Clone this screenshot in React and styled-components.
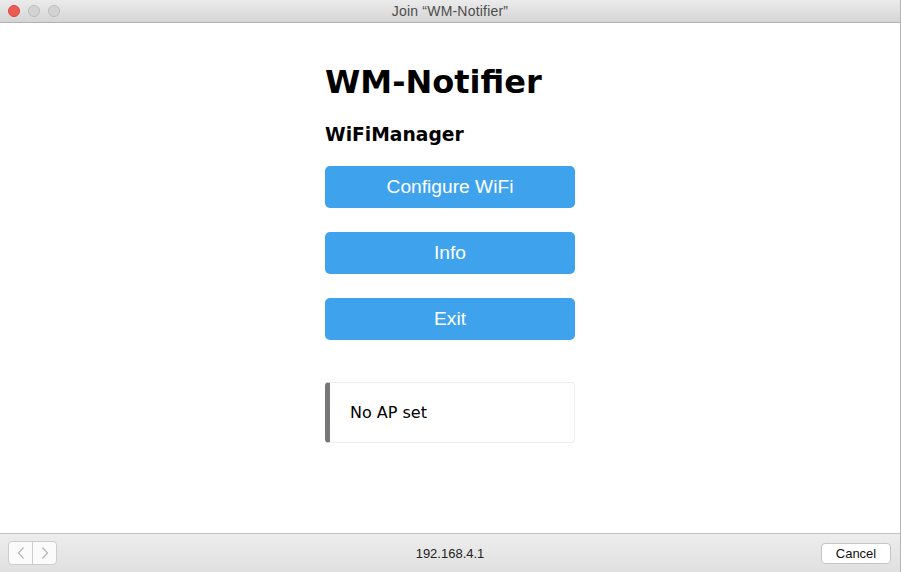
import React from 'react';
import styled, { createGlobalStyle } from 'styled-components';

const GlobalStyle = createGlobalStyle`
  html, body {
    margin: 0;
    padding: 0;
    background: #1f6f6c;
  }
`;

const Window = styled.div`
  width: 900px;
  height: 572px;
  display: flex;
  flex-direction: column;
  background: #fff;
  border-right: 1px solid #b4b4b4;
  overflow: hidden;
`;

const TitleBar = styled.div`
  height: 22px;
  flex-shrink: 0;
  position: relative;
  display: flex;
  align-items: center;
  justify-content: center;
  background: linear-gradient(#ebebeb, #d5d5d5);
  border-bottom: 1px solid #b1b1b1;
  font-family: 'Liberation Sans', Arial, sans-serif;
  font-size: 14px;
  letter-spacing: 0.2px;
  color: #4d4d4d;
`;

const Lights = styled.div`
  position: absolute;
  left: 8px;
  top: 5px;
  display: flex;
  gap: 8px;
`;

const Light = styled.span`
  width: 12px;
  height: 12px;
  box-sizing: border-box;
  border-radius: 50%;
  background: ${({ color }) => color};
  border: 1px solid ${({ edge }) => edge};
`;

const Content = styled.main`
  flex: 1;
  padding-top: 40px;
  font-family: 'DejaVu Sans', Verdana, sans-serif;
`;

const Column = styled.div`
  width: 250px;
  margin: 0 auto;
`;

const Title = styled.h1`
  font-size: 32px;
  font-weight: bold;
  margin: 0 0 23px;
  color: #000;
`;

const SubTitle = styled.h3`
  font-size: 18.72px;
  font-weight: bold;
  margin: 0 0 21px;
  color: #000;
`;

const MenuButton = styled.button`
  display: block;
  width: 100%;
  height: 42px;
  margin: 0 0 24px;
  border: 0;
  border-radius: 5px;
  background: #3ea3ec;
  color: #fff;
  font-family: 'Liberation Sans', Arial, sans-serif;
  font-size: 19.2px;
  cursor: pointer;
`;

const Message = styled.div`
  margin-top: 42px;
  padding: 20px;
  border: 1px solid #eeeeee;
  border-left: 5px solid #777;
  border-radius: 4px;
  font-size: 16px;
  color: #000;
`;

const BottomBar = styled.div`
  height: 38px;
  flex-shrink: 0;
  display: flex;
  align-items: center;
  justify-content: space-between;
  padding: 0 9px 0 8px;
  background: linear-gradient(#ededed, #e0e0e0);
  border-top: 1px solid #c2c2c2;
  font-family: 'Liberation Sans', Arial, sans-serif;
  font-size: 13px;
  color: #222;
  position: relative;
`;

const NavGroup = styled.div`
  display: flex;
  height: 22px;
  border: 1px solid #cdcdcd;
  border-radius: 4px;
  background: #fbfbfb;
  overflow: hidden;
`;

const NavButton = styled.span`
  width: 23px;
  display: flex;
  align-items: center;
  justify-content: center;
  & + & {
    border-left: 1px solid #cdcdcd;
  }
`;

const Address = styled.div`
  position: absolute;
  left: 0;
  right: 0;
  text-align: center;
  pointer-events: none;
`;

const CancelButton = styled.button`
  width: 70px;
  height: 21px;
  border: 1px solid #c4c4c4;
  border-radius: 4px;
  background: #fff;
  font-family: 'Liberation Sans', Arial, sans-serif;
  font-size: 13px;
  color: #111;
  padding: 0;
`;

const Chevron = ({ dir }) => (
  <svg width="10" height="14" viewBox="0 0 10 14">
    <path
      d={dir === 'left' ? 'M7.5 1.5 L2.5 7 L7.5 12.5' : 'M2.5 1.5 L7.5 7 L2.5 12.5'}
      fill="none"
      stroke="#b5b5b5"
      strokeWidth="1.2"
    />
  </svg>
);

export default function App() {
  return (
    <Window>
      <GlobalStyle />
      <TitleBar>
        <Lights>
          <Light color="#ee5b53" edge="#d9463f" />
          <Light color="#d3d3d3" edge="#bdbdbd" />
          <Light color="#d3d3d3" edge="#bdbdbd" />
        </Lights>
        Join “WM-Notifier”
      </TitleBar>
      <Content>
        <Column>
          <Title>WM-Notifier</Title>
          <SubTitle>WiFiManager</SubTitle>
          <MenuButton>Configure WiFi</MenuButton>
          <MenuButton>Info</MenuButton>
          <MenuButton>Exit</MenuButton>
          <Message>No AP set</Message>
        </Column>
      </Content>
      <BottomBar>
        <NavGroup>
          <NavButton><Chevron dir="left" /></NavButton>
          <NavButton><Chevron dir="right" /></NavButton>
        </NavGroup>
        <Address>192.168.4.1</Address>
        <CancelButton>Cancel</CancelButton>
      </BottomBar>
    </Window>
  );
}
